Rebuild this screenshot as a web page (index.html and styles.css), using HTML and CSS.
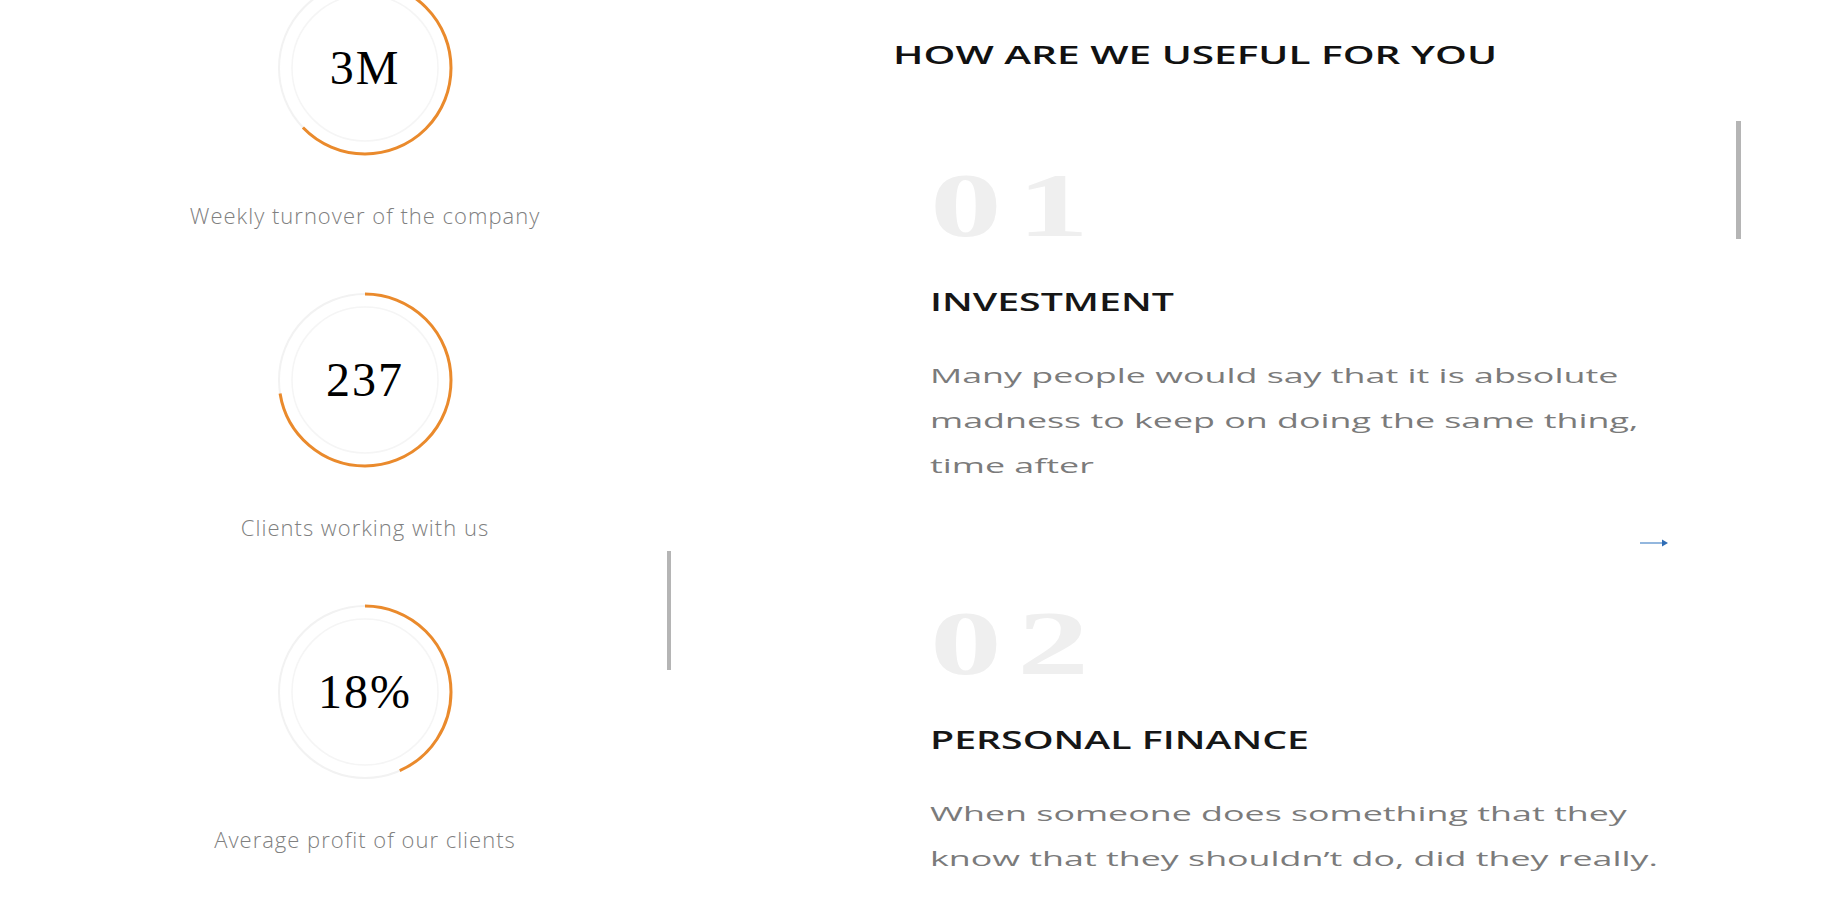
FILE: index.html
```html
<!DOCTYPE html>
<html lang="en">
<head>
<meta charset="utf-8">
<title>How are we useful for you</title>
<link rel="stylesheet" href="styles.css">
</head>
<body>
<div class="page">
  <section class="stats">
    <div class="stat">
      <div class="ring">
        <svg class="ring-svg" viewBox="0 0 176 176" width="176" height="176">
          <circle class="ring-track" cx="88" cy="88" r="86"/>
          <circle class="ring-inner" cx="88" cy="88" r="73"/>
          <circle class="ring-arc" cx="88" cy="88" r="86" stroke-dasharray="339 541" transform="rotate(-90 88 88)"/>
        </svg>
        <div class="stat-value">3M</div>
      </div>
      <div class="stat-label">Weekly turnover of the company</div>
    </div>
    <div class="stat">
      <div class="ring">
        <svg class="ring-svg" viewBox="0 0 176 176" width="176" height="176">
          <circle class="ring-track" cx="88" cy="88" r="86"/>
          <circle class="ring-inner" cx="88" cy="88" r="73"/>
          <circle class="ring-arc" cx="88" cy="88" r="86" stroke-dasharray="391 541" transform="rotate(-90 88 88)"/>
        </svg>
        <div class="stat-value">237</div>
      </div>
      <div class="stat-label">Clients working with us</div>
    </div>
    <div class="stat">
      <div class="ring">
        <svg class="ring-svg" viewBox="0 0 176 176" width="176" height="176">
          <circle class="ring-track" cx="88" cy="88" r="86"/>
          <circle class="ring-inner" cx="88" cy="88" r="73"/>
          <circle class="ring-arc" cx="88" cy="88" r="86" stroke-dasharray="234 541" transform="rotate(-90 88 88)"/>
        </svg>
        <div class="stat-value">18%</div>
      </div>
      <div class="stat-label">Average profit of our clients</div>
    </div>
    <div class="thumb thumb-left"></div>
  </section>

  <section class="services">
    <h2 class="services-title">HOW ARE WE USEFUL FOR YOU</h2>
    <div class="service-list">
      <article class="service">
        <div class="service-num">01</div>
        <h3 class="service-title">INVESTMENT</h3>
        <p class="service-text">Many people would say that it is absolute madness to keep on doing the same thing, time after</p>
        <div class="service-more">
          <svg class="arrow" viewBox="0 0 30 10" width="30" height="10">
            <line x1="1" y1="5" x2="25" y2="5" class="arrow-line"/>
            <polygon points="23,1.5 29,5 23,8.5" class="arrow-head"/>
          </svg>
        </div>
      </article>
      <article class="service">
        <div class="service-num">02</div>
        <h3 class="service-title">PERSONAL FINANCE</h3>
        <p class="service-text">When someone does something that they know that they shouldn’t do, did they really.</p>
      </article>
    </div>
    <div class="thumb thumb-right"></div>
  </section>
</div>
</body>
</html>
```

FILE: styles.css
```css
* {
  box-sizing: border-box;
}

html, body {
  margin: 0;
  padding: 0;
  background: #ffffff;
}

body {
  font-family: "Open Sans", "Liberation Sans", sans-serif;
  color: #222;
}

.page {
  display: flex;
  height: 900px;
  overflow: hidden;
}

/* ---------- left: stats ---------- */
.stats {
  position: relative;
  flex: none;
  width: 730px;
  margin-top: -20px;
}

.stat {
  display: flex;
  flex-direction: column;
  align-items: center;
  height: 312px;
}

.ring {
  display: grid;
  width: 176px;
  height: 176px;
  place-items: center;
}

.ring-svg,
.stat-value {
  grid-area: 1 / 1;
}

.ring-track {
  fill: none;
  stroke: #f2f2f2;
  stroke-width: 2;
}

.ring-inner {
  fill: none;
  stroke: #f5f5f5;
  stroke-width: 1.5;
}

.ring-arc {
  fill: none;
  stroke: #ea8a2c;
  stroke-width: 3;
}

.stat-value {
  font-family: "Liberation Serif", "DejaVu Serif", serif;
  font-size: 48px;
  font-weight: 400;
  line-height: 52px;
  letter-spacing: 2px;
  color: #000;
}

.stat-label {
  margin-top: 47px;
  font-size: 22px;
  line-height: 24px;
  font-weight: 300;
  letter-spacing: 1px;
  color: #808080;
  white-space: nowrap;
}

.thumb {
  position: absolute;
  background: #b5b5b5;
}

.thumb-left {
  left: 667px;
  top: 571px;
  width: 4px;
  height: 119px;
}

/* ---------- right: services ---------- */
.services {
  position: relative;
  flex: none;
  width: 860px;
  margin-left: 163px;
  padding-top: 38px;
}

.services-title {
  margin: 0;
  font-size: 26px;
  line-height: 32px;
  font-weight: 600;
  color: #111;
  white-space: nowrap;
  transform: scaleX(1.56);
  transform-origin: 0 0;
}

.service-list {
  margin-top: 88px;
  padding-left: 37px;
}

.service {
  margin-bottom: 43px;
}

.service-num {
  font-family: "Liberation Serif", "DejaVu Serif", serif;
  font-weight: 700;
  font-size: 92px;
  line-height: 94px;
  letter-spacing: 10px;
  color: #efefef;
  transform: scaleX(1.56);
  transform-origin: 0 0;
}

.service-title {
  margin: 33px 0 0;
  font-size: 26px;
  line-height: 32px;
  font-weight: 600;
  color: #161616;
  white-space: nowrap;
  transform: scaleX(1.51);
  transform-origin: 0 0;
}

.service-text {
  width: 425px;
  margin: 36px 0 0;
  font-size: 20px;
  line-height: 45px;
  color: #7b7b7b;
  transform: scaleX(1.79);
  transform-origin: 0 0;
}

.service-more {
  display: flex;
  justify-content: flex-end;
  align-items: center;
  width: 739px;
  height: 20px;
  margin-top: 45px;
}

.arrow-line {
  stroke: #6f9fd3;
  stroke-width: 1.5;
}

.arrow-head {
  fill: #2f6db5;
}

.thumb-right {
  left: 843px;
  top: 121px;
  width: 5px;
  height: 118px;
}
```
